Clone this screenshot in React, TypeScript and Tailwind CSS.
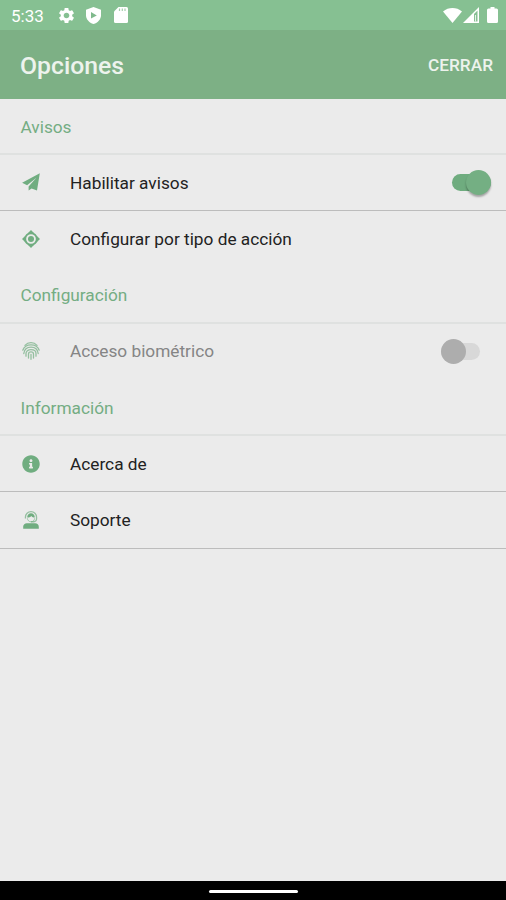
import React from 'react';
import { FaInfoCircle } from 'react-icons/fa';
import { MdSettings } from 'react-icons/md';

interface SwitchProps {
  checked: boolean;
}

// Interruptor estilo Material
const Switch: React.FC<SwitchProps> = ({ checked }) =>
  checked ? (
    <div className="flex h-[17px] w-[39px] items-center justify-end rounded-full bg-[#6fac7f]">
      <div className="h-[25px] w-[25px] shrink-0 rounded-full bg-[#74af83] shadow-[0_2px_2px_rgba(0,0,0,0.3)]" />
    </div>
  ) : (
    <div className="flex h-[17px] w-[39px] items-center rounded-full bg-[#d8d8d8]">
      <div className="h-[25px] w-[25px] shrink-0 rounded-full bg-[#adadad]" />
    </div>
  );

const PlaneIcon: React.FC = () => (
  <svg viewBox="0 0 18 18" width="18" height="18" fill="currentColor">
    <path d="M17.800.2L.1 9.800l5 2.500L14.400 4.700 6.600 13.400v4.200l3-2.100 5.400 2.100z" />
  </svg>
);

const TargetIcon: React.FC = () => (
  <svg viewBox="0 0 18 18" width="18" height="18">
    <circle cx="9" cy="9" r="5.800" fill="none" stroke="currentColor" strokeWidth="1.900" />
    <circle cx="9" cy="9" r="3" fill="currentColor" />
    <path
      d="M9 0l3.200 3.300H5.800zM9 18l3.200-3.300H5.800zM0 9l3.300-3.200v6.400zM18 9l-3.300-3.200v6.400z"
      fill="currentColor"
    />
  </svg>
);

const FingerprintIcon: React.FC = () => (
  <svg viewBox="0 0 18 18" width="18" height="18" fill="none" stroke="currentColor" strokeWidth="1.300" strokeLinecap="round">
    <path d="M3 3.400C6.200-.2 11.800-.2 15 3.400" />
    <path d="M.8 8.200C2 4.800 5 2.900 9 2.900s7 1.900 8.200 5.300" />
    <path d="M1.800 11.500C2.300 7.500 5 5.200 9 5.200s6.700 2.300 7.200 6.300" />
    <path d="M4 14.200V11.500C4 9.200 6 7.600 9 7.600s5 1.600 5 3.900v2.700" />
    <path d="M6.500 16v-4c0-2.800 5-2.800 5 0v4M9 12.300v5" />
  </svg>
);

const SupportIcon: React.FC = () => (
  <svg viewBox="0 0 18 18" width="18" height="18" fill="currentColor">
    <path d="M9 0a6.200 6.200 0 0 0-6.200 6.200v1.300h1.300V6.200a4.900 4.900 0 0 1 9.800 0v1.600c0 1.300-.8 2.300-2 2.300H9v1.300h2.900c2 0 3.300-1.500 3.300-3.600V6.200A6.200 6.200 0 0 0 9 0z" opacity=".7" />
    <path d="M5.200 6.600C5.200 4 6.800 2.300 9 2.300s3.800 1.700 3.800 4.300c-1.500 0-2.700-.5-3.500-1.500C8.500 6.200 7 6.600 5.200 6.600z" />
    <path d="M5.400 7.300c.2 2 1.600 3.500 3.600 3.500s3.400-1.500 3.600-3.500" fill="none" stroke="currentColor" opacity=".6" />
    <path d="M1.200 17.800v-2c0-2 1.600-3.500 3.600-3.500h8.400c2 0 3.600 1.500 3.600 3.500v2z" />
  </svg>
);

const StatusBar: React.FC = () => (
  <div className="flex h-[30px] items-center bg-[#86c092] pl-[11px] pr-[8px] text-white">
    <span className="w-[46px] pt-[2px] text-[17px] leading-none">5:33</span>
    <MdSettings size={19} />
    {/* Escudo de Play Protect */}
    <svg className="ml-[10px]" width="15" height="17" viewBox="0 0 15 17">
      <path d="M7.500 0L15 2.700v5.500c0 4-3 7.400-7.500 8.800C3 15.600 0 12.200 0 8.200V2.700z" fill="#fff" />
      <path d="M5 5l5.800 3.500L5 11.500z" fill="#7fb98c" />
    </svg>
    {/* Tarjeta SD */}
    <svg className="ml-[13px]" width="14" height="16" viewBox="0 0 14 16">
      <path d="M4.500 0H12.500Q14 0 14 1.500V14.500Q14 16 12.500 16H1.500Q0 16 0 14.500V4.500z" fill="#fff" />
      <path d="M5.500 1.500v2.500M8.300 1.500v2.500M11 1.500v2.500" stroke="#a5cfad" strokeWidth="1.200" />
    </svg>
    <div className="ml-auto flex items-center">
      <svg width="19" height="15" viewBox="0 0 19 15">
        <path d="M0 3.500C5.500-1.100 13.500-1.100 19 3.500L9.500 15z" fill="#fff" />
      </svg>
      <svg className="ml-[1px]" width="16" height="16" viewBox="0 0 16 16">
        <path d="M0 16L16 0v16z" fill="#fff" />
        <path d="M11 7l3.500-3.500v11H11z" fill="#86c092" />
        <path d="M12.500 8v6.500" stroke="#fff" strokeWidth=".8" />
      </svg>
      <svg className="ml-[8px]" width="11" height="16" viewBox="0 0 11 16">
        <path d="M3.500 0h4v1.500H9.500Q11 1.500 11 3V14.500Q11 16 9.500 16H1.500Q0 16 0 14.500V3Q0 1.500 1.500 1.500H3.500z" fill="#fff" />
      </svg>
    </div>
  </div>
);

interface SectionProps {
  title: string;
}

const Section: React.FC<SectionProps> = ({ title }) => (
  <h2 className="flex h-[56.25px] items-center border-b-2 border-[#dfe1e0] pl-[20.5px] pt-[4px] text-[17.25px] text-[#74ad83]">
    {title}
  </h2>
);

interface RowProps {
  icon: React.ReactNode;
  label: string;
  divider?: boolean;
  disabled?: boolean;
  children?: React.ReactNode;
}

const Row: React.FC<RowProps> = ({ icon, label, divider, disabled, children }) => (
  <div
    className={`flex h-[56.25px] items-center border-b pl-[22px] text-[17.25px] ${
      divider ? 'border-[#bcbcbc]' : 'border-transparent'
    } ${disabled ? 'text-[#858585]' : 'text-[#222222]'}`}
  >
    <span className={`flex w-[48px] text-[#70ad80] ${disabled ? 'opacity-70' : ''}`}>{icon}</span>
    <span className="pt-[2.5px]">{label}</span>
    {children}
  </div>
);

const App: React.FC = () => (
  <div className="flex h-[900px] w-[506px] flex-col overflow-hidden bg-[#ebebeb] font-['Roboto',sans-serif]">
    <StatusBar />
    <header className="flex h-[68.5px] items-center justify-between bg-[#7db085] pl-[20px] pr-[13px] pt-[2px] text-[#edf3ed]">
      <h1 className="text-[24.75px] font-medium">Opciones</h1>
      <button className="pt-[1px] text-[17.25px] font-medium">CERRAR</button>
    </header>

    <main className="flex-1">
      <Section title="Avisos" />
      <Row icon={<PlaneIcon />} label="Habilitar avisos" divider>
        <div className="ml-auto pr-[15px]">
          <Switch checked />
        </div>
      </Row>
      <Row icon={<TargetIcon />} label="Configurar por tipo de acción" />

      <Section title="Configuración" />
      <Row icon={<FingerprintIcon />} label="Acceso biométrico" disabled>
        <div className="ml-auto pr-[26px]">
          <Switch checked={false} />
        </div>
      </Row>

      <Section title="Información" />
      <Row icon={<FaInfoCircle size={18} />} label="Acerca de" divider />
      <Row icon={<SupportIcon />} label="Soporte" divider />
    </main>

    {/* Barra de navegación del sistema */}
    <nav className="flex h-[19px] items-center justify-center bg-black pt-[2px]">
      <div className="h-[3px] w-[89px] rounded-full bg-white" />
    </nav>
  </div>
);

export default App;
